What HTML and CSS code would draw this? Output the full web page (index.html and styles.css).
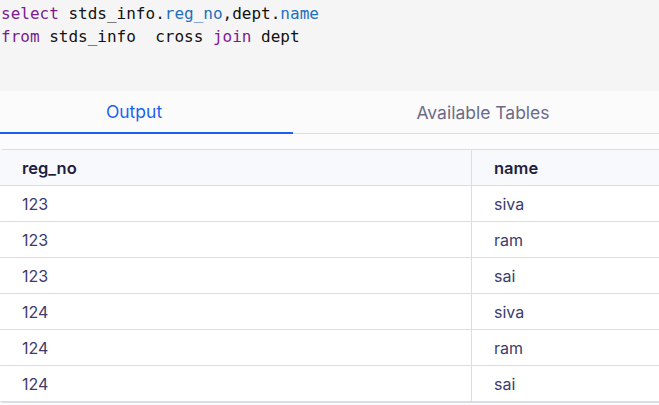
FILE: index.html
```html
<!DOCTYPE html>
<html>
<head>
<meta charset="utf-8">
<link rel="stylesheet" href="styles.css">
</head>
<body>
<div class="page">
  <pre class="code"><span class="kw">select</span> stds_info.<span class="prop">reg_no</span>,dept.<span class="prop">name</span>
<span class="kw">from</span> stds_info  cross <span class="kw">join</span> dept</pre>
  <div class="tabs">
    <div class="tab active">Output</div>
    <div class="tab other">Available Tables</div>
  </div>
  <div class="result">
    <table class="grid">
      <thead>
        <tr><th class="c1">reg_no</th><th class="c2">name</th></tr>
      </thead>
      <tbody>
        <tr><td>123</td><td>siva</td></tr>
        <tr><td>123</td><td>ram</td></tr>
        <tr><td>123</td><td>sai</td></tr>
        <tr><td>124</td><td>siva</td></tr>
        <tr><td>124</td><td>ram</td></tr>
        <tr><td>124</td><td>sai</td></tr>
      </tbody>
    </table>
  </div>
</div>
</body>
</html>
```
FILE: styles.css
```css
html, body {
  margin: 0;
  padding: 0;
  background: #fcfcfc;
  overflow: hidden;
}
.page {
  width: 659px;
  height: 405px;
  overflow: hidden;
}
.code {
  margin: 0;
  height: 91px;
  box-sizing: border-box;
  padding: 2px 0 0 1px;
  background: #f5f5f5;
  font-family: "DejaVu Sans Mono", monospace;
  font-size: 16px;
  line-height: 23px;
  color: #111;
}
.kw { color: #7a1b8f; }
.prop { color: #1f6fbf; }
.tabs {
  display: flex;
  height: 43px;
  background: #fbfbfb;
  border-bottom: 1px solid #d8dde6;
  box-sizing: border-box;
  font-family: "Inter", "Open Sans", sans-serif;
  font-size: 17.5px;
}
.tab {
  display: flex;
  align-items: center;
  justify-content: center;
  box-sizing: border-box;
}
.tab.active {
  width: 293px;
  padding-right: 25px;
  color: #1d5ff0;
  border-bottom: 2px solid #1d5ff0;
  margin-bottom: -1px;
}
.tab.other {
  flex: 1;
  padding-left: 14px;
  color: #6b6b88;
}
.result {
  padding-top: 15px;
  width: 700px;
}
.grid {
  width: 700px;
  margin-left: -1px;
  border-collapse: separate;
  border-spacing: 0;
  border: 1px solid #d8dde6;
  border-radius: 4px;
  font-family: "Inter", "Open Sans", sans-serif;
  font-size: 16px;
  color: #3c3c6c;
}
.grid th {
  background: #f8f9fd;
  text-align: left;
  font-weight: 600;
  font-size: 16.5px;
  color: #1f1f3d;
  height: 35px;
  padding: 0 0 0 22px;
  border-bottom: 1px solid #d8dde6;
}
.grid th.c1 { width: 449px; border-right: 1px solid #d8dde6; }
.grid td {
  height: 35px;
  padding: 0 0 0 22px;
  border-bottom: 1px solid #d8dde6;
  background: #fff;
}
.grid td:first-child { border-right: 1px solid #d8dde6; }
```
